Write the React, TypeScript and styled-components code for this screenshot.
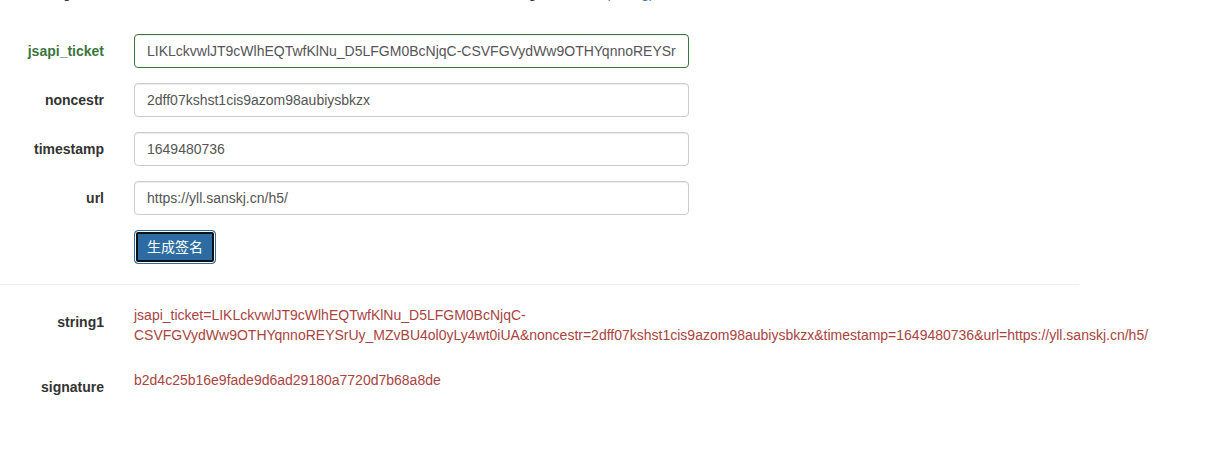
import React from "react";
import styled, { createGlobalStyle } from "styled-components";

const GlobalStyle = createGlobalStyle`
  html, body { margin: 0; padding: 0; background: #fff; }
  body {
    font-family: "Liberation Sans", Arial, Helvetica, sans-serif;
    font-size: 14px;
    line-height: 1.42857143;
    color: #333;
    overflow: hidden;
  }
`;

const Page = styled.div`
  width: 1216px;
  height: 451px;
  overflow: hidden;
`;

const TopNote = styled.p`
  margin: -17px 0 31px 0;
  padding-left: 35px;
  height: 20px;
  white-space: nowrap;
  color: #333;
  font-size: 14px;
  line-height: 20px;
`;

const NoteLink = styled.span`
  color: #337ab7;
`;

const Form = styled.form`
  display: flex;
  flex-direction: column;
  margin: 0;
`;

const Group = styled.div<{ $last?: boolean }>`
  display: grid;
  grid-template-columns: 104px 555px;
  column-gap: 30px;
  margin-bottom: ${(p) => (p.$last ? "0" : "15px")};
`;

const Label = styled.label<{ $success?: boolean }>`
  text-align: right;
  font-weight: bold;
  padding-top: 7px;
  color: ${(p) => (p.$success ? "#3c763d" : "#333")};
`;

const Input = styled.input<{ $success?: boolean }>`
  box-sizing: border-box;
  display: block;
  width: 555px;
  height: 34px;
  padding: 6px 12px;
  font-family: "Liberation Sans", Arial, sans-serif;
  font-size: 14px;
  line-height: 20px;
  color: #555;
  background: #fff;
  border: 1px solid ${(p) => (p.$success ? "#3c763d" : "#ccc")};
  border-radius: 4px;
  box-shadow: inset 0 1px 1px rgba(0, 0, 0, 0.075);
  outline: none;
`;

const Button = styled.button`
  box-sizing: border-box;
  width: 82px;
  height: 34px;
  padding: 6px 12px;
  font-family: "Liberation Sans", "Noto Sans CJK SC", sans-serif;
  font-size: 14px;
  line-height: 20px;
  color: #fff;
  background: #2d6ca2;
  border: 1px solid #2e6da4;
  border-radius: 4px;
  box-shadow: inset 0 0 0 1px #fff, inset 0 0 0 3px #111;
  cursor: pointer;
`;

const Rule = styled.hr`
  width: 1079px;
  margin: 20px 0 20px 0;
  border: 0;
  border-top: 1px solid #eee;
`;

const ResultGroup = styled.div`
  display: grid;
  grid-template-columns: 104px 1060px;
  column-gap: 30px;
  margin-bottom: 15px;
`;

const Value = styled.p`
  margin: 0 0 10px 0;
  color: #a94442;
  word-break: normal;
`;

const ticket =
  "LIKLckvwlJT9cWlhEQTwfKlNu_D5LFGM0BcNjqC-CSVFGVydWw9OTHYqnnoREYSrUy_MZvBU4ol0yLy4wt0iUA";
const noncestr = "2dff07kshst1cis9azom98aubiysbkzx";
const timestamp = "1649480736";
const url = "https://yll.sanskj.cn/h5/";

export default function App() {
  const string1 = `jsapi_ticket=${ticket}&noncestr=${noncestr}&timestamp=${timestamp}&url=${url}`;
  return (
    <Page>
      <GlobalStyle />
      <TopNote>
        Using the sha1 ticket, the noncestr and the url in total, then sha1 the whole string to a result{" "}
        <NoteLink>(debug)</NoteLink>
      </TopNote>
      <Form onSubmit={(e) => e.preventDefault()}>
        <Group>
          <Label $success>jsapi_ticket</Label>
          <Input $success defaultValue={ticket} />
        </Group>
        <Group>
          <Label>noncestr</Label>
          <Input defaultValue={noncestr} />
        </Group>
        <Group>
          <Label>timestamp</Label>
          <Input defaultValue={timestamp} />
        </Group>
        <Group>
          <Label>url</Label>
          <Input defaultValue={url} />
        </Group>
        <Group $last>
          <span />
          <div>
            <Button type="button">生成签名</Button>
          </div>
        </Group>
      </Form>
      <Rule />
      <ResultGroup>
        <Label>string1</Label>
        <Value>{string1}</Value>
      </ResultGroup>
      <ResultGroup>
        <Label>signature</Label>
        <Value>b2d4c25b16e9fade9d6ad29180a7720d7b68a8de</Value>
      </ResultGroup>
    </Page>
  );
}
